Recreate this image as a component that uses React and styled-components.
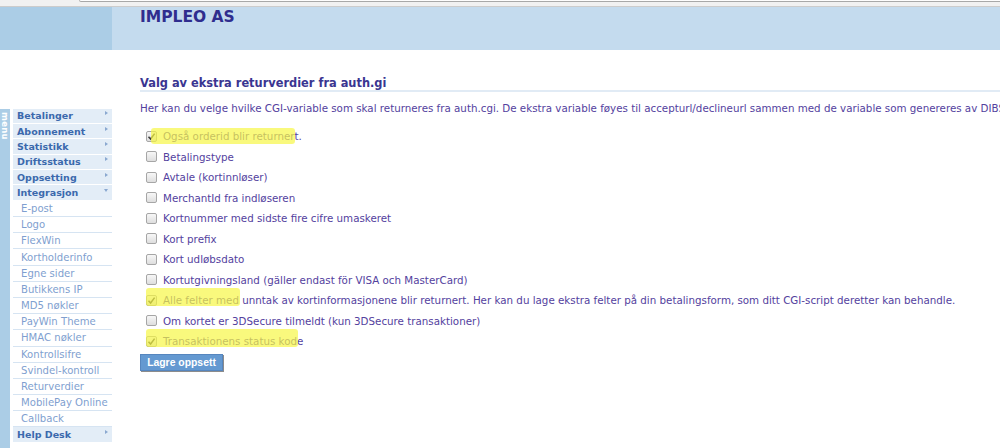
import React from "react";
import styled, { createGlobalStyle } from "styled-components";

const GlobalStyle = createGlobalStyle`
  html, body { margin: 0; padding: 0; background: #ffffff; overflow: hidden; }
  body { font-family: "DejaVu Sans", Verdana, sans-serif; }
  * { box-sizing: border-box; }
`;

const Page = styled.div`
  width: 1000px;
  height: 448px;
  overflow: hidden;
  display: flex;
  flex-direction: column;
  background: #fff;
`;

const Chrome = styled.div`
  height: 7px;
  flex: none;
  background: #f1f1f1;
  border-bottom: 1px solid #cccccc;
  display: flex;
  align-items: flex-start;
`;

const AddressBar = styled.div`
  margin-left: 79px;
  flex: 1;
  height: 2px;
  background: #fdfdfd;
  border-left: 1px solid #b4b4b4;
  border-bottom: 1px solid #a8a8a8;
  border-bottom-left-radius: 3px;
`;

const Header = styled.div`
  height: 43px;
  flex: none;
  display: flex;
`;

const HeaderSide = styled.div`
  width: 112px;
  background: #abcde6;
`;

const HeaderMain = styled.div`
  flex: 1;
  background: #c4dbee;
  padding: 1px 0 0 28px;
`;

const Brand = styled.div`
  font-weight: bold;
  font-size: 15.5px;
  line-height: 18px;
  color: #2f2d8e;
`;

const Body = styled.div`
  flex: 1;
  display: flex;
  min-height: 0;
`;

const Sidebar = styled.div`
  width: 112px;
  flex: none;
  padding-top: 58.5px;
  display: flex;
  align-items: flex-start;
  gap: 3px;
`;

const MenuTab = styled.div`
  width: 10px;
  align-self: stretch;
  background: #abcde6;
  color: #ffffff;
  font-weight: bold;
  font-size: 8.5px;
  writing-mode: vertical-rl;
  line-height: 10px;
  padding-top: 3px;
  letter-spacing: 0.3px;
`;

const Menu = styled.div`
  flex: 1;
  display: flex;
  flex-direction: column;
`;

const TopItem = styled.div`
  height: 15.4px;
  background: #e3edf7;
  border-bottom: 1px solid #ffffff;
  color: #3b69ad;
  font-weight: bold;
  font-size: 9.5px;
  padding-left: 4px;
  padding-right: 4px;
  display: flex;
  align-items: center;
  justify-content: space-between;
`;

const SubItem = styled.div`
  height: 16.2px;
  border-bottom: 1px solid #d6e4f2;
  color: #7f9fd0;
  font-size: 10.1px;
  padding-left: 8px;
  display: flex;
  align-items: center;
`;

const Arrow = styled.span`
  width: 0;
  height: 0;
  border-style: solid;
  ${(p) =>
    p.$down
      ? `border-width: 3px 2.5px 0 2.5px; border-color: #8aa8d0 transparent transparent transparent; margin-top: -5px;`
      : `border-width: 2.5px 0 2.5px 3px; border-color: transparent transparent transparent #8aa8d0; margin-top: -5px;`}
`;

const Main = styled.div`
  flex: 1;
  min-width: 0;
  padding: 27px 0 0 28px;
  display: flex;
  flex-direction: column;
`;

const Title = styled.div`
  font-weight: bold;
  font-size: 11.4px;
  line-height: 13px;
  color: #3a3591;
  border-bottom: 2px solid #e1ebf5;
  white-space: nowrap;
`;

const Intro = styled.div`
  margin-top: 10px;
  font-size: 10.3px;
  line-height: 13px;
  color: #53419e;
  white-space: nowrap;
`;

const OptionList = styled.div`
  margin-top: 10.75px;
  display: flex;
  flex-direction: column;
`;

const Row = styled.label`
  position: relative;
  height: 20.5px;
  display: flex;
  align-items: center;
  gap: 6px;
  padding-left: 6px;
  font-size: 10.3px;
  color: #53419e;
  white-space: nowrap;
`;

const Box = styled.span`
  width: 11px;
  height: 11px;
  flex: none;
  border: 1px solid #a6a6a6;
  border-radius: 2px;
  background: linear-gradient(#f7f7f7, #dedede);
  display: flex;
  align-items: center;
  justify-content: center;
`;

const Highlight = styled.span`
  position: absolute;
  left: ${(p) => p.$left}px;
  width: ${(p) => p.$width}px;
  top: ${(p) => p.$top}px;
  height: ${(p) => p.$height}px;
  background: rgba(246, 246, 70, 0.7);
  border-radius: 3px;
  pointer-events: none;
`;

const SaveButton = styled.button`
  margin-top: 3px;
  align-self: flex-start;
  width: 83px;
  height: 17px;
  padding: 0;
  background: #6499d1;
  border: 1px solid #5686be;
  box-shadow: 1px 1px 0 #8c8c8c;
  color: #ffffff;
  font-family: "Liberation Sans", Arial, sans-serif;
  font-weight: bold;
  font-size: 10.4px;
  line-height: 15px;
`;

const Check = () => (
  <svg width="9" height="9" viewBox="0 0 9 9">
    <path d="M1.5 4.8 L3.6 7 L7.6 1.6" fill="none" stroke="#3a3a3a" strokeWidth="1.5" />
  </svg>
);

const topItems = ["Betalinger", "Abonnement", "Statistikk", "Driftsstatus", "Oppsetting"];
const subItems = [
  "E-post",
  "Logo",
  "FlexWin",
  "Kortholderinfo",
  "Egne sider",
  "Butikkens IP",
  "MD5 nøkler",
  "PayWin Theme",
  "HMAC nøkler",
  "Kontrollsifre",
  "Svindel-kontroll",
  "Returverdier",
  "MobilePay Online",
  "Callback",
];

const options = [
  { label: "Også orderid blir returnert.", checked: true, hl: { left: 11, width: 144, top: 2.2, height: 16 } },
  { label: "Betalingstype" },
  { label: "Avtale (kortinnløser)" },
  { label: "MerchantId fra indløseren" },
  { label: "Kortnummer med sidste fire cifre umaskeret" },
  { label: "Kort prefix" },
  { label: "Kort udløbsdato" },
  { label: "Kortutgivningsland (gäller endast för VISA och MasterCard)" },
  {
    label:
      "Alle felter med unntak av kortinformasjonene blir returnert. Her kan du lage ekstra felter på din betalingsform, som ditt CGI-script deretter kan behandle.",
    checked: true,
    hl: { left: 6, width: 94, top: -1.7, height: 18 },
  },
  { label: "Om kortet er 3DSecure tilmeldt (kun 3DSecure transaktioner)" },
  { label: "Transaktionens status kode", checked: true, hl: { left: 6, width: 152, top: -1.7, height: 18 } },
];

export default function App() {
  return (
    <Page>
      <GlobalStyle />
      <Chrome>
        <AddressBar />
      </Chrome>
      <Header>
        <HeaderSide />
        <HeaderMain>
          <Brand>IMPLEO AS</Brand>
        </HeaderMain>
      </Header>
      <Body>
        <Sidebar>
          <MenuTab>menu</MenuTab>
          <Menu>
            {topItems.map((t) => (
              <TopItem key={t}>
                {t}
                <Arrow />
              </TopItem>
            ))}
            <TopItem>
              Integrasjon
              <Arrow $down />
            </TopItem>
            {subItems.map((s) => (
              <SubItem key={s}>{s}</SubItem>
            ))}
            <TopItem>
              Help Desk
              <Arrow />
            </TopItem>
          </Menu>
        </Sidebar>
        <Main>
          <Title>Valg av ekstra returverdier fra auth.gi</Title>
          <Intro>
            Her kan du velge hvilke CGI-variable som skal returneres fra auth.cgi. De ekstra variable føyes til
            accepturl/declineurl sammen med de variable som genereres av DIBS
          </Intro>
          <OptionList>
            {options.map((o) => (
              <Row key={o.label}>
                <Box>{o.checked && <Check />}</Box>
                <span>{o.label}</span>
                {o.hl && <Highlight $left={o.hl.left} $width={o.hl.width} $top={o.hl.top} $height={o.hl.height} />}
              </Row>
            ))}
          </OptionList>
          <SaveButton type="button">Lagre oppsett</SaveButton>
        </Main>
      </Body>
    </Page>
  );
}
